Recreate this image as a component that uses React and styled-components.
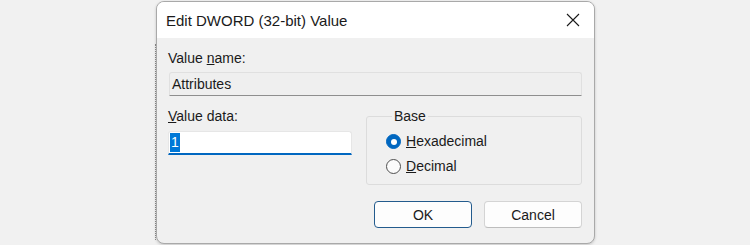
import React, { useState } from "react";
import styled, { createGlobalStyle } from "styled-components";

const GlobalStyle = createGlobalStyle`
  html, body {
    margin: 0;
    padding: 0;
    background: #f1f1f1;
    font-family: "Liberation Sans", Arial, sans-serif;
    color: #1a1a1a;
  }
`;

const Page = styled.div`
  display: flex;
  width: 750px;
  height: 245px;
  overflow: hidden;
  background: #f1f1f1;
`;

const BackdropEdge = styled.div`
  width: 0;
  margin: 44px 0 0 155px;
  height: 196px;
  border-left: 1px dotted #8a8a8a;
`;

const Dialog = styled.div`
  box-sizing: border-box;
  width: 439px;
  height: 243px;
  margin-top: 1px;
  background: #f0f0f0;
  border: 1px solid #a9a9a9;
  border-radius: 8px;
  box-shadow: 0 1px 3px rgba(0, 0, 0, 0.18);
  overflow: hidden;
  display: flex;
  flex-direction: column;
`;

const TitleBar = styled.div`
  height: 36px;
  background: #ffffff;
  display: flex;
  align-items: center;
  justify-content: space-between;
  padding: 0 14px 0 9px;
  font-size: 15px;
`;

const CloseButton = styled.button`
  border: none;
  background: transparent;
  padding: 0;
  width: 14px;
  height: 14px;
  display: flex;
  cursor: pointer;
`;

const Body = styled.div`
  display: flex;
  flex-direction: column;
  padding: 12px 12px 0 11px;
`;

const Label = styled.div`
  font-size: 14px;
  line-height: 17px;
  margin-bottom: ${(p) => p.gap || 5}px;
`;

const ReadOnlyField = styled.div`
  box-sizing: border-box;
  height: 24px;
  margin-left: 1px;
  border: 1px solid #e0e0e0;
  border-bottom-color: #8e8e8e;
  border-radius: 3px 3px 0 0;
  background: #efefef;
  font-size: 14px;
  display: flex;
  align-items: center;
  padding-left: 2px;
`;

const Columns = styled.div`
  display: flex;
  gap: 14px;
  margin-top: 12px;
`;

const LeftColumn = styled.div`
  width: 184px;
  display: flex;
  flex-direction: column;
`;

const DataInput = styled.div`
  box-sizing: border-box;
  height: 24px;
  background: #ffffff;
  border: 1px solid #e6e6e6;
  border-bottom: 2px solid #0067c0;
  border-radius: 3px 3px 0 0;
  display: flex;
  align-items: center;
  padding-left: 1px;
  font-size: 14px;
`;

const Selection = styled.span`
  background: #0078d7;
  color: #ffffff;
  padding: 1px 1px;
  line-height: 17px;
`;

const BaseGroup = styled.fieldset`
  box-sizing: border-box;
  width: 216px;
  height: 77px;
  margin: 0;
  padding: 9px 0 0 19px;
  border: 1px solid #dcdcdc;
  border-radius: 3px;
  display: flex;
  flex-direction: column;
  gap: 8px;
`;

const Legend = styled.legend`
  font-size: 14px;
  padding: 0 2px;
  margin-left: 6px;
`;

const RadioRow = styled.label`
  display: flex;
  align-items: center;
  gap: 5px;
  font-size: 14px;
  line-height: 17px;
  cursor: pointer;
`;

const RadioDot = styled.span`
  box-sizing: border-box;
  width: 15px;
  height: 15px;
  border-radius: 50%;
  background: ${(p) => (p.checked ? "#0067c0" : "#fbfbfb")};
  border: 1px solid ${(p) => (p.checked ? "#0067c0" : "#4f4f4f")};
  display: flex;
  align-items: center;
  justify-content: center;
  &::after {
    content: "";
    width: 6px;
    height: 6px;
    border-radius: 50%;
    background: #ffffff;
    display: ${(p) => (p.checked ? "block" : "none")};
  }
`;

const ButtonRow = styled.div`
  display: flex;
  justify-content: flex-end;
  gap: 12px;
  margin-top: 16px;
`;

const Button = styled.button`
  box-sizing: border-box;
  width: 98px;
  height: 27px;
  font-family: inherit;
  font-size: 14px;
  color: #1a1a1a;
  background: #fdfdfd;
  border: 1px solid ${(p) => (p.primary ? "#235b8d" : "#d4d4d4")};
  border-bottom-color: ${(p) => (p.primary ? "#235b8d" : "#bdbdbd")};
  border-radius: 4px;
  cursor: pointer;
`;

const Radio = ({ checked, onClick, accessKey, rest }) => (
  <RadioRow onClick={onClick}>
    <RadioDot checked={checked} />
    <span>
      <u>{accessKey}</u>
      {rest}
    </span>
  </RadioRow>
);

const App = () => {
  const [base, setBase] = useState("hex");

  return (
    <Page>
      <GlobalStyle />
      <BackdropEdge />
      <Dialog>
        <TitleBar>
          <span>Edit DWORD (32-bit) Value</span>
          <CloseButton aria-label="Close">
            <svg width="14" height="14" viewBox="0 0 14 14">
              <path d="M1 1 L13 13 M13 1 L1 13" stroke="#1a1a1a" strokeWidth="1.1" />
            </svg>
          </CloseButton>
        </TitleBar>
        <Body>
          <Label>
            Value <u>n</u>ame:
          </Label>
          <ReadOnlyField>Attributes</ReadOnlyField>
          <Columns>
            <LeftColumn>
              <Label gap={6}>
                <u>V</u>alue data:
              </Label>
              <DataInput>
                <Selection>1</Selection>
              </DataInput>
            </LeftColumn>
            <BaseGroup>
              <Legend>Base</Legend>
              <Radio
                checked={base === "hex"}
                onClick={() => setBase("hex")}
                accessKey="H"
                rest="exadecimal"
              />
              <Radio
                checked={base === "dec"}
                onClick={() => setBase("dec")}
                accessKey="D"
                rest="ecimal"
              />
            </BaseGroup>
          </Columns>
          <ButtonRow>
            <Button primary>OK</Button>
            <Button>Cancel</Button>
          </ButtonRow>
        </Body>
      </Dialog>
    </Page>
  );
};

export default App;
